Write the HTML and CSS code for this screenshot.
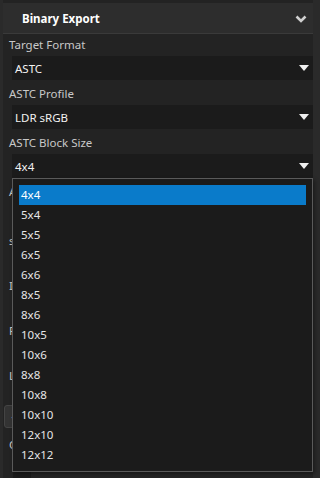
FILE: index.html
```html
<!DOCTYPE html>
<html lang="en">
<head>
    <meta charset="UTF-8">
    <meta name="viewport" content="width=device-width, initial-scale=1.0">
    <title>Binary Export</title>
    <link rel="stylesheet" href="styles.css">
</head>
<body>
    <div class="page">
        <div class="panel">
            <div class="header">
                <span class="title">Binary Export</span>
                <svg class="chevron" width="12" height="8" viewBox="0 0 12 8">
                    <path d="M1.5 1.5 L6 6 L10.5 1.5" fill="none" stroke="#d0d0d0" stroke-width="2.6"/>
                </svg>
            </div>
            <div class="body">
                <div class="field">
                    <div class="label first">Target Format</div>
                    <div class="select"><span>ASTC</span><i class="arrow"></i></div>
                </div>
                <div class="field">
                    <div class="label">ASTC Profile</div>
                    <div class="select"><span>LDR sRGB</span><i class="arrow"></i></div>
                </div>
                <div class="field">
                    <div class="label">ASTC Block Size</div>
                    <div class="select"><span>4x4</span><i class="arrow"></i></div>
                </div>

                <!-- these sit under the open list, only their first letters show -->
                <div class="under">
                    <div class="field">
                        <div class="label">A</div>
                        <div class="select"></div>
                    </div>
                    <div class="field">
                        <div class="label">s</div>
                        <div class="select short"></div>
                    </div>
                    <div class="field">
                        <div class="label">I</div>
                        <div class="select short"></div>
                    </div>
                    <div class="field">
                        <div class="label">F</div>
                        <div class="select short"></div>
                    </div>
                    <div class="label">L</div>
                    <div class="button-row"><span class="small-btn">·</span></div>
                    <div class="label">C</div>
                    <div class="stub"></div>
                </div>
            </div>
        </div>

        <div class="dropdown">
            <div class="option selected">4x4</div>
            <div class="option">5x4</div>
            <div class="option">5x5</div>
            <div class="option">6x5</div>
            <div class="option">6x6</div>
            <div class="option">8x5</div>
            <div class="option">8x6</div>
            <div class="option">10x5</div>
            <div class="option">10x6</div>
            <div class="option">8x8</div>
            <div class="option">10x8</div>
            <div class="option">10x10</div>
            <div class="option">12x10</div>
            <div class="option">12x12</div>
        </div>
    </div>
</body>
</html>
```

FILE: styles.css
```css
body {
    margin: 0;
    background-color: #2a2a2a;
    font-family: "Noto Sans", "Open Sans", sans-serif;
    font-size: 11.5px;
    color: #c8c8c8;
    overflow: hidden;
}

.page {
    position: relative;
    width: 320px;
    height: 478px;
    overflow: hidden;
}

.panel {
    width: 310px;
    height: 478px;
    padding-top: 3px;
    margin-left: 3px;
    background: #232323;
    box-sizing: border-box;
}

.header {
    height: 30px;
    display: flex;
    align-items: center;
    justify-content: space-between;
    padding: 0 6px 0 19px;
    background: #2d2d2d;
    border-bottom: 1px solid #3a3a3a;
}

.title {
    font-weight: bold;
    color: #ffffff;
    font-size: 11.5px;
}

.chevron {
    margin-top: 1px;
}

.body {
    padding-left: 9px;
}

.label {
    height: 16px;
    line-height: 16px;
    padding: 6px 0 3px;
    margin-left: -3px;
    white-space: nowrap;
}

.label.first {
    padding-top: 3px;
}

.select {
    height: 24px;
    display: flex;
    align-items: center;
    justify-content: space-between;
    padding: 0 4px 0 3px;
    background: #1b1b1b;
    color: #f2f2f2;
}

.select.short {
    height: 20px;
}

.arrow {
    width: 0;
    height: 0;
    border-left: 5px solid transparent;
    border-right: 5px solid transparent;
    border-top: 6px solid #f0f0f0;
}

.button-row {
    padding: 18px 0 3px;
    margin-left: -8px;
}

.small-btn {
    display: block;
    width: 40px;
    height: 23px;
    box-sizing: border-box;
    padding-left: 6px;
    line-height: 21px;
    background: #333333;
    border: 1px solid #444444;
    border-radius: 3px;
    color: #cccccc;
}

.stub {
    width: 18px;
    height: 24px;
    margin: 16px 0 0 1px;
    background: #1b1b1b;
}

.dropdown {
    position: absolute;
    top: 178px;
    left: 12px;
    width: 301px;
    height: 294px;
    box-sizing: border-box;
    padding: 6px;
    background: #1b1b1b;
    border: 1px solid #5a5a5a;
    box-shadow: 2px 2px 4px rgba(0, 0, 0, 0.35);
}

.option {
    height: 20px;
    line-height: 20px;
    padding-left: 2px;
    color: #e6e6e6;
}

.option.selected {
    background: #0a7bca;
    color: #ffffff;
}
```
